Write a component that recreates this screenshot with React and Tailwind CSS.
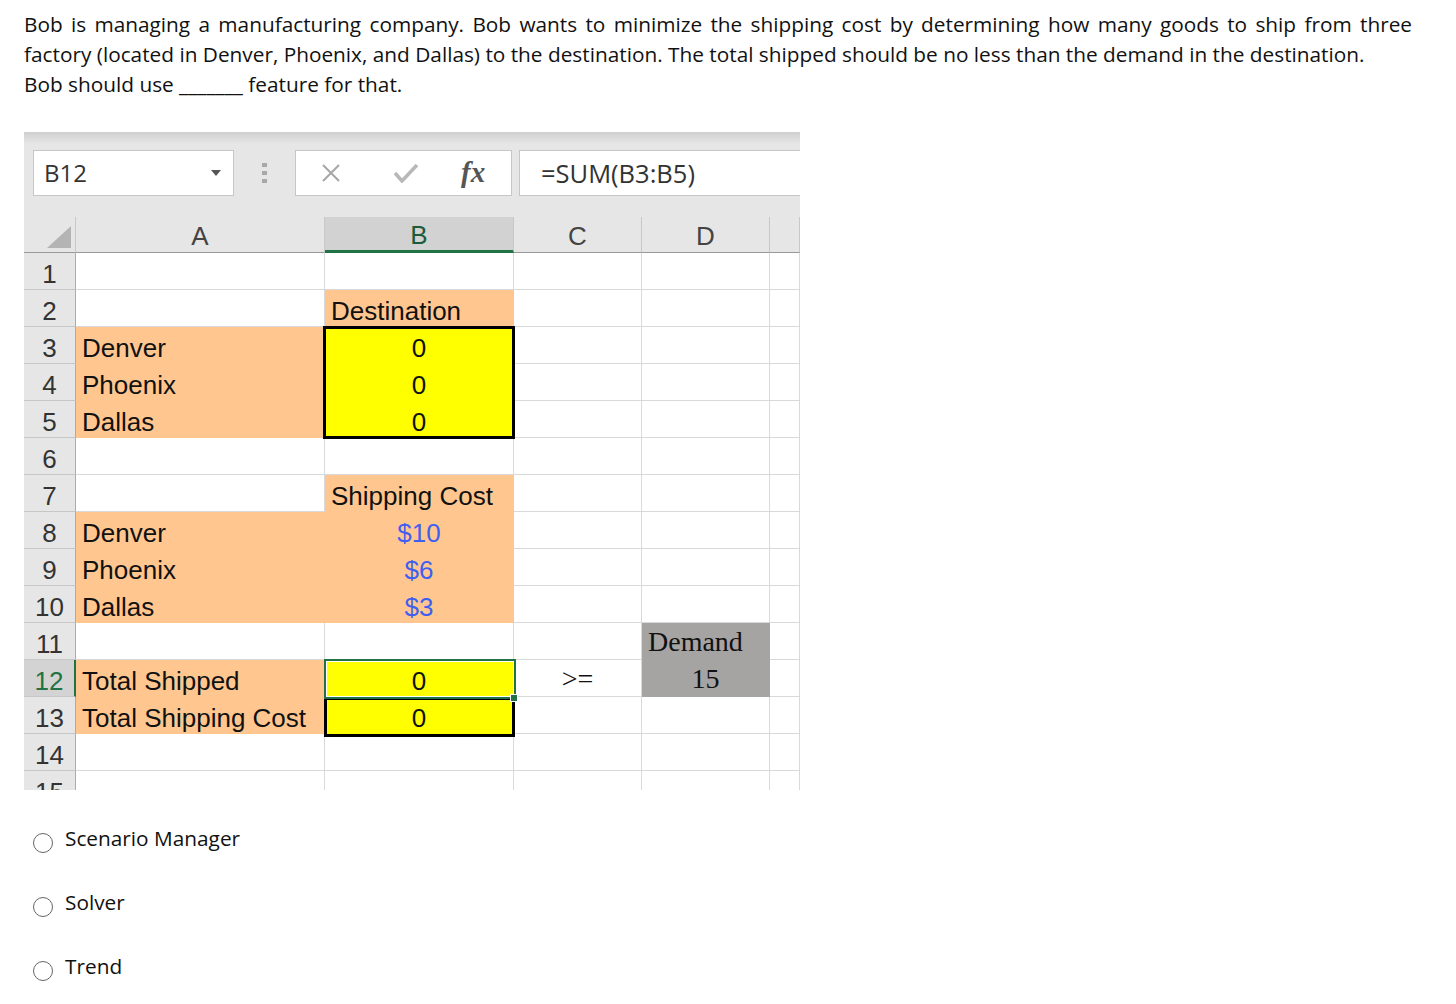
import React from "react";

const rows = [
  [{}, {}, {}, {}, {}],
  [{}, { t: "Destination", f: "o" }, {}, {}, {}],
  [{ t: "Denver", f: "o" }, { t: "0", f: "y", c: true }, {}, {}, {}],
  [{ t: "Phoenix", f: "o" }, { t: "0", f: "y", c: true }, {}, {}, {}],
  [{ t: "Dallas", f: "o" }, { t: "0", f: "y", c: true }, {}, {}, {}],
  [{}, {}, {}, {}, {}],
  [{}, { t: "Shipping Cost", f: "o" }, {}, {}, {}],
  [{ t: "Denver", f: "o" }, { t: "$10", f: "o", c: true, blue: true }, {}, {}, {}],
  [{ t: "Phoenix", f: "o" }, { t: "$6", f: "o", c: true, blue: true }, {}, {}, {}],
  [{ t: "Dallas", f: "o" }, { t: "$3", f: "o", c: true, blue: true }, {}, {}, {}],
  [{}, {}, {}, { t: "Demand", f: "g", serif: true }, {}],
  [
    { t: "Total Shipped", f: "o" },
    { t: "0", f: "y", c: true },
    { t: ">=", c: true, serif: true },
    { t: "15", f: "g", c: true, serif: true },
    {},
  ],
  [{ t: "Total Shipping Cost", f: "o" }, { t: "0", f: "y", c: true }, {}, {}, {}],
  [{}, {}, {}, {}, {}],
  [{}, {}, {}, {}, {}],
];

const fills = {
  o: "bg-[#ffc78f] border-[#ffc78f]",
  y: "bg-[#ffff00] border-[#ffff00]",
  g: "bg-[#a6a3a3] border-[#a6a3a3]",
};

function Cell({ cell }) {
  const fill = cell.f ? fills[cell.f] : "bg-white border-[#d9d9d9]";
  const font = cell.serif
    ? "font-['Liberation_Serif',serif] text-[28px] pb-[2px]"
    : "font-['Liberation_Sans',Arial,sans-serif] text-[26px] pb-0";
  return (
    <div
      className={`flex items-end whitespace-nowrap border-r border-b leading-[30px] ${fill} ${font} ${
        cell.c ? "justify-center" : "pl-[6px]"
      } ${cell.blue ? "text-[#3f5ff0]" : "text-[#111]"}`}
    >
      {cell.t}
    </div>
  );
}

function Toolbar() {
  return (
    <div className="flex h-[85px] items-start bg-[linear-gradient(#cfcfcf,#e6e6e6_12px)] pl-[9px] pt-[18px]">
      <div className="flex h-[46px] w-[201px] items-center justify-between border border-[#c6c6c6] bg-white pl-[10px] pr-[12px]">
        <span className="font-['Open_Sans',sans-serif] text-[24px] text-[#333]">B12</span>
        <svg width="10" height="6" viewBox="0 0 10 6">
          <path d="M0 0h10L5 6z" fill="#555" />
        </svg>
      </div>
      <div className="ml-[28px] mt-[13px] flex flex-col gap-[4px]">
        <div className="h-[4px] w-[5px] bg-[#a8a8a8]" />
        <div className="h-[4px] w-[5px] bg-[#a8a8a8]" />
        <div className="h-[4px] w-[5px] bg-[#a8a8a8]" />
      </div>
      <div className="ml-[28px] flex h-[46px] w-[217px] items-center border border-[#c6c6c6] bg-white">
        <svg className="ml-[25px]" width="20" height="20" viewBox="0 0 20 20">
          <path d="M2 2l16 16M18 2L2 18" stroke="#a6a6a6" strokeWidth="2" />
        </svg>
        <svg className="ml-[52px]" width="26" height="20" viewBox="0 0 26 20">
          <path d="M2 10l7 8L24 2" stroke="#b8b8b8" strokeWidth="3.5" fill="none" />
        </svg>
        <span className="ml-[42px] font-['Liberation_Serif',serif] text-[29px] font-bold italic text-[#555]">fx</span>
      </div>
      <div className="ml-[7px] flex h-[46px] flex-1 items-center border-y border-l border-[#c6c6c6] bg-white pl-[21px]">
        <span className="font-['Open_Sans',sans-serif] text-[25.5px] text-[#333]">=SUM(B3:B5)</span>
      </div>
    </div>
  );
}

function Sheet() {
  const cols = ["A", "B", "C", "D", ""];
  return (
    <div className="relative grid grid-cols-[52px_249px_189px_128px_128px_30px] grid-rows-[36px_repeat(15,37px)]">
      <div className="flex items-end justify-end border-r border-b border-r-[#c8c8c8] border-b-[#999] bg-[#e6e6e6] pb-[4px] pr-[4px]">
        <svg width="24" height="22" viewBox="0 0 24 22">
          <path d="M24 0v22H0z" fill="#b4b4b4" />
        </svg>
      </div>
      {cols.map((c) =>
        c === "B" ? (
          <div
            key="B"
            className="flex items-end justify-center border-r border-r-[#c8c8c8] border-b-[3px] border-b-[#217346] bg-[#d2d2d2] pb-0 font-['Liberation_Sans',Arial,sans-serif] text-[26px] leading-[30px] text-[#1d5c3a]"
          >
            B
          </div>
        ) : (
          <div
            key={c || "E"}
            className="flex items-end justify-center border-r border-b border-r-[#c8c8c8] border-b-[#999] bg-[#e6e6e6] pb-[1px] font-['Liberation_Sans',Arial,sans-serif] text-[26px] leading-[30px] text-[#444]"
          >
            {c}
          </div>
        )
      )}
      {rows.map((r, i) => (
        <React.Fragment key={i}>
          {i === 11 ? (
            <div className="flex items-end justify-center border-r-2 border-b border-r-[#217346] border-b-[#c6c6c6] bg-[#d3d3d3] pb-0 font-['Liberation_Sans',Arial,sans-serif] text-[26px] leading-[30px] text-[#217346]">
              {i + 1}
            </div>
          ) : (
            <div className="flex items-end justify-center border-r border-b border-r-[#ababab] border-b-[#c6c6c6] bg-[#e6e6e6] pb-0 font-['Liberation_Sans',Arial,sans-serif] text-[26px] leading-[30px] text-[#333]">
              {i + 1}
            </div>
          )}
          {r.map((cell, j) => (
            <Cell key={j} cell={cell} />
          ))}
        </React.Fragment>
      ))}
      {/* borders drawn over the grid */}
      <div className="absolute left-[299px] top-[109px] h-[113px] w-[192px] border-[3px] border-black" />
      <div className="absolute left-[300px] top-[480px] h-[40px] w-[191px] border-[3px] border-black" />
      <div className="absolute left-[300px] top-[442px] h-[40px] w-[192px] border-2 border-[#217346]">
        <div className="h-full w-full border border-white" />
      </div>
      <div className="absolute left-[486px] top-[477px] h-[8px] w-[8px] border border-white bg-[#217346]" />
    </div>
  );
}

function Option({ label }) {
  return (
    <div className="flex h-[30px] items-start">
      <div className="ml-[9px] mt-[10px] h-[20px] w-[20px] rounded-full border-[1.5px] border-[#666]" />
      <span className="ml-[12px] text-[20.8px] leading-[30px] text-[#111]">{label}</span>
    </div>
  );
}

export default function App() {
  return (
    <div className="min-h-screen bg-white font-['Open_Sans',sans-serif] text-[#111]">
      <div className="w-[1412px] pl-6 pt-[9px] text-[20.8px] leading-[30px]">
        <div className="text-justify [text-align-last:justify]">
          Bob is managing a manufacturing company. Bob wants to minimize the shipping cost by determining how many goods to ship from three
        </div>
        <div>
          factory (located in Denver, Phoenix, and Dallas) to the destination. The total shipped should be no less than the demand in the destination.
        </div>
        <div>Bob should use _______ feature for that.</div>
      </div>

      <div className="ml-6 mt-[33px] h-[658px] w-[776px] overflow-hidden">
        <Toolbar />
        <Sheet />
      </div>

      <div className="ml-6 mt-[33px] flex flex-col gap-[34px]">
        <Option label="Scenario Manager" />
        <Option label="Solver" />
        <Option label="Trend" />
      </div>
    </div>
  );
}
